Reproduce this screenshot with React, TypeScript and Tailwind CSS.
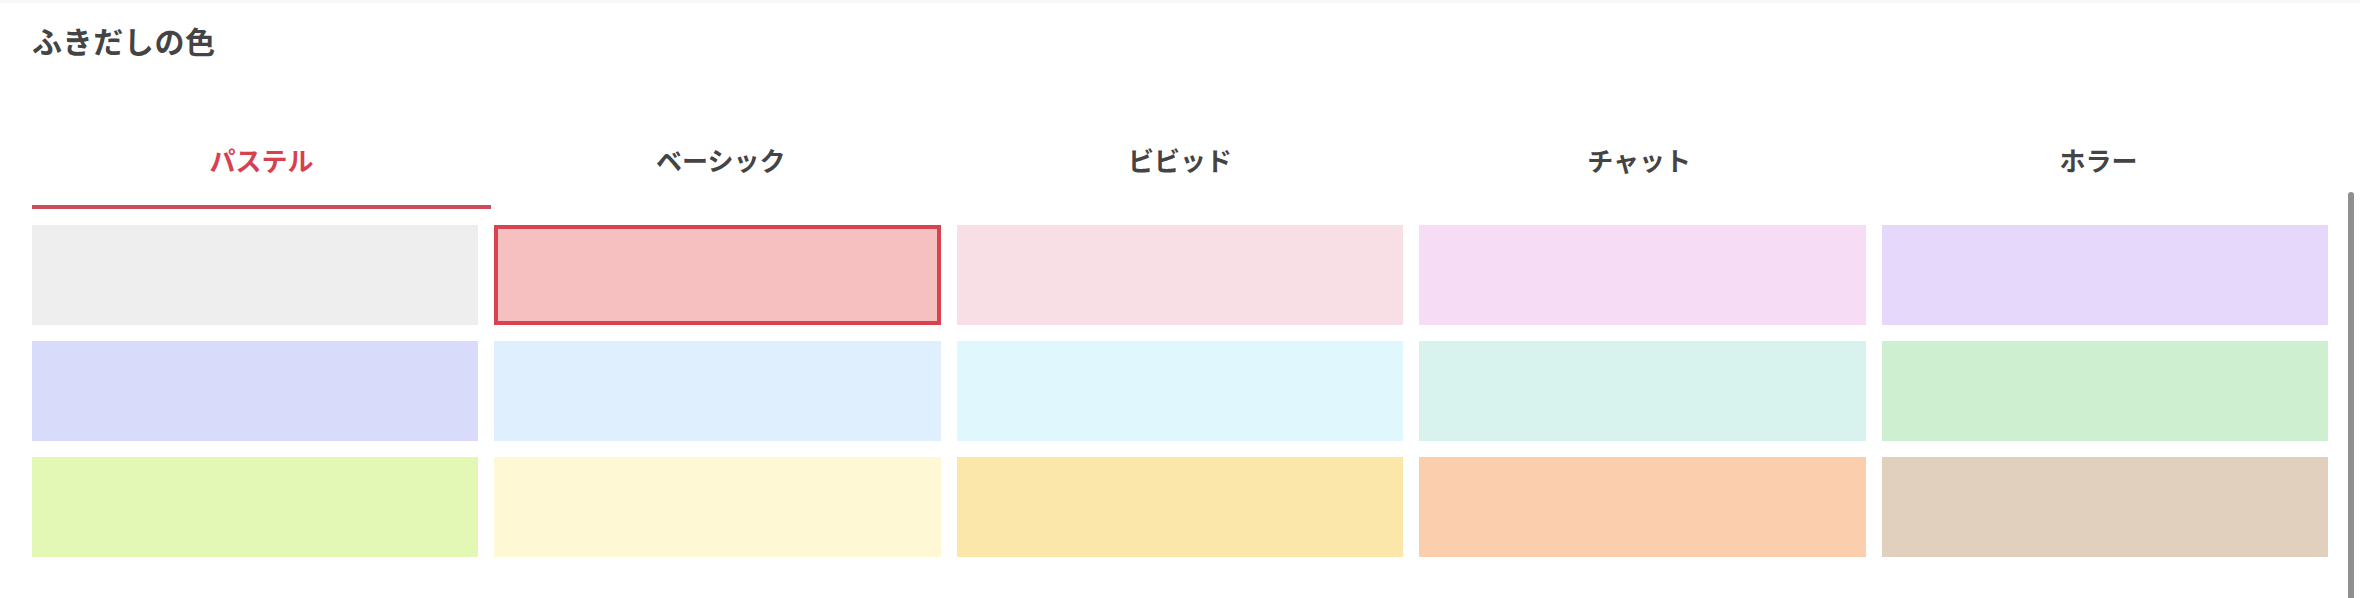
import React, { useState } from "react";

const tabs = ["パステル", "ベーシック", "ビビッド", "チャット", "ホラー"];

const swatches = [
  "#eeeeee",
  "#f7c0c0",
  "#f8dee5",
  "#f6ddf5",
  "#e5d8fb",
  "#d9dbfb",
  "#e0effd",
  "#dff7fd",
  "#d8f2ed",
  "#ceefd0",
  "#e4f8b5",
  "#fef8d4",
  "#fbe7aa",
  "#fbcead",
  "#e0d0bd",
];

export default function App() {
  const [tab, setTab] = useState(0);
  const [picked, setPicked] = useState(1);

  return (
    <div
      className="relative h-[598px] w-full overflow-hidden bg-white"
      style={{ fontFamily: '"Noto Sans CJK JP", "Noto Sans", sans-serif' }}
    >
      <div className="h-[3px] bg-[#f7f7f7]"></div>

      <div className="px-[32px] pr-[32px]">
        <h2 className="mt-[22px] text-[30px] leading-none font-bold tracking-[0.02em] text-[#444444]">
          ふきだしの色
        </h2>

        {/* Tabs */}
        <div className="mt-[60px] grid grid-cols-5">
          {tabs.map((label, i) => (
            <button
              key={label}
              onClick={() => setTab(i)}
              className={`pt-[32px] pb-[32px] text-[26px] leading-none font-bold border-b-4 ${
                tab === i
                  ? "text-[#d6404f] border-[#cf4b5b]"
                  : "text-[#444444] border-transparent"
              }`}
            >
              {label}
            </button>
          ))}
        </div>

        {/* Swatches */}
        <div className="mt-[16px] grid grid-cols-5 gap-4">
          {swatches.map((color, i) => (
            <button
              key={i}
              onClick={() => setPicked(i)}
              className={`h-[100px] ${
                picked === i ? "border-4 border-[#d9434f]" : ""
              }`}
              style={{ backgroundColor: color }}
            ></button>
          ))}
        </div>
      </div>

      {/* overlay scrollbar thumb */}
      <div className="absolute left-[2348px] top-[192px] h-[420px] w-[6px] rounded-full bg-[#8f8f8f]"></div>
    </div>
  );
}
